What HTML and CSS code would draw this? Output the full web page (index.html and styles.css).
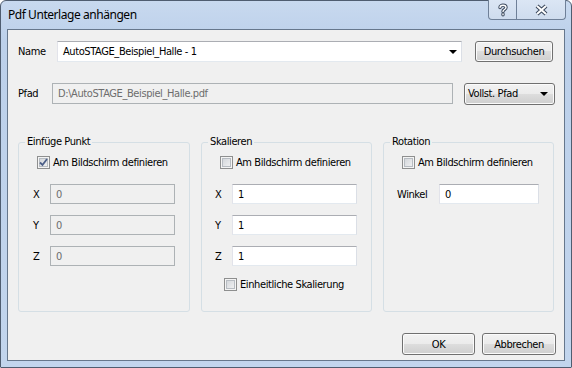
FILE: index.html
```html
<!DOCTYPE html>
<html lang="de">
<head>
    <meta charset="UTF-8">
    <title>Pdf Unterlage anhängen</title>
    <link rel="stylesheet" href="styles.css">
</head>
<body>

    <!--Fenster-->
    <div class="window">

        <!--Titelleiste-->
        <div class="titlebar">
            <span class="title">Pdf Unterlage anhängen</span>
            <div class="caption-btns">
                <button class="cap-btn help">
                    <svg width="12" height="14" viewBox="0 0 12 14">
                        <path d="M3 4.5 C3 1.5 9 1.5 9 4.5 C9 6.5 6 6.5 6 8.5 M6 11 L6 11.8" fill="none" stroke="#3c4a5e" stroke-width="3.4" stroke-linecap="round"/>
                        <path d="M3 4.5 C3 1.5 9 1.5 9 4.5 C9 6.5 6 6.5 6 8.5 M6 11 L6 11.8" fill="none" stroke="#fff" stroke-width="1.4" stroke-linecap="round"/>
                    </svg>
                </button>
                <button class="cap-btn close">
                    <svg width="15" height="12" viewBox="0 0 15 12">
                        <path d="M3 2 L12 10 M12 2 L3 10" fill="none" stroke="#3c4a5e" stroke-width="4.2"/>
                        <path d="M3 2 L12 10 M12 2 L3 10" fill="none" stroke="#fff" stroke-width="2"/>
                    </svg>
                </button>
            </div>
        </div>

        <!--Inhalt-->
        <div class="client">

            <div class="row">
                <label class="lbl name-lbl">Name</label>
                <div class="combo name-combo">
                    <span>AutoSTAGE_Beispiel_Halle - 1</span>
                    <span class="arrow"></span>
                </div>
                <button class="btn browse">Durchsuchen</button>
            </div>

            <div class="row row2">
                <label class="lbl path-lbl">Pfad</label>
                <input class="txt path-txt" type="text" value="D:\AutoSTAGE_Beispiel_Halle.pdf" disabled>
                <button class="btn drop">Vollst. Pfad<span class="arrow"></span></button>
            </div>

            <!--Gruppen-->
            <div class="groups">
                <fieldset class="group g1">
                    <legend>Einfüge Punkt</legend>
                    <div class="check-row">
                        <span class="chk checked">
                            <svg width="9" height="9" viewBox="0 0 9 9"><path d="M1 4.5 L3.5 7 L8 1" fill="none" stroke="#4c5f88" stroke-width="1.8"/></svg>
                        </span>
                        Am Bildschirm definieren
                    </div>
                    <div class="field"><span class="flbl">X</span><input class="txt" type="text" value="0" disabled></div>
                    <div class="field"><span class="flbl">Y</span><input class="txt" type="text" value="0" disabled></div>
                    <div class="field"><span class="flbl">Z</span><input class="txt" type="text" value="0" disabled></div>
                </fieldset>

                <fieldset class="group g2">
                    <legend>Skalieren</legend>
                    <div class="check-row"><span class="chk"></span>Am Bildschirm definieren</div>
                    <div class="field"><span class="flbl">X</span><input class="txt" type="text" value="1"></div>
                    <div class="field"><span class="flbl">Y</span><input class="txt" type="text" value="1"></div>
                    <div class="field"><span class="flbl">Z</span><input class="txt" type="text" value="1"></div>
                    <div class="check-row uniform"><span class="chk"></span>Einheitliche Skalierung</div>
                </fieldset>

                <fieldset class="group g3">
                    <legend>Rotation</legend>
                    <div class="check-row"><span class="chk"></span>Am Bildschirm definieren</div>
                    <div class="field"><span class="flbl winkel">Winkel</span><input class="txt angle" type="text" value="0"></div>
                </fieldset>
            </div>

            <!--Buttons unten-->
            <div class="footer">
                <button class="btn ok">OK</button>
                <button class="btn cancel">Abbrechen</button>
            </div>
        </div>
    </div>

</body>
</html>
```

FILE: styles.css
```css
/* ---------- BASIS ---------- */
* { box-sizing:border-box; }

body {
    margin:0;
    background:#fff;
    font:11px "DejaVu Sans Condensed", "Liberation Sans", sans-serif;
    letter-spacing:-0.4px;
    color:#000;
}

/* ---------- FENSTER ---------- */
.window {
    width:572px;
    height:368px;
    background:linear-gradient(#c8d9ef, #bcd0ea 40px, #c2d5ed);
    border:1px solid #4f5d70;
    border-radius:6px 6px 1px 1px;
    padding:0 6px 6px;
    display:flex;
    flex-direction:column;
}

.titlebar {
    height:28px;
    display:flex;
    align-items:flex-start;
}

.title {
    font:12px "Noto Sans", "Open Sans", sans-serif;
    letter-spacing:-0.45px;
    padding:5px 0 0 1px;
    color:#000;
}

.caption-btns {
    margin:-1px -1px 0 auto;
    display:flex;
}

.cap-btn {
    height:20px;
    border:1px solid #6f8098;
    border-top:none;
    background:linear-gradient(#dbe6f4, #cfdcee);
    padding:0;
    display:flex;
    align-items:center;
    justify-content:center;
}
.cap-btn.help { width:29px; border-radius:0 0 0 4px; }
.cap-btn.close { width:49px; border-left:none; border-radius:0 0 4px 0; }

/* ---------- CLIENT ---------- */
.client {
    flex:1;
    background:#f0f0f0;
    border:1px solid #66778c;
    padding:11px 0 0 10px;
    display:flex;
    flex-direction:column;
}

.row {
    display:flex;
    align-items:center;
    height:21px;
}
.row2 { margin-top:21px; }

.name-lbl { width:39px; }
.path-lbl { width:34px; }

/* ---------- TEXTFELDER ---------- */
.txt {
    height:20px;
    width:125px;
    border:1px solid;
    border-color:#abadb3 #dbdfe6 #e3e9ef #e2e3ea;
    background:#fff;
    padding:0 0 0 5px;
    font:inherit;
    letter-spacing:inherit;
    color:#000;
    outline:none;
}
.txt:disabled {
    background:#f0f0f0;
    border-color:#adb2b5;
    color:#6d6d6d;
}
.path-txt { width:401px; height:21px; }

.combo {
    height:21px;
    border:1px solid;
    border-color:#abadb3 #dbdfe6 #e3e9ef #e2e3ea;
    background:#fff;
    display:flex;
    align-items:center;
    padding:0 0 0 5px;
}
.name-combo { width:405px; }

.arrow {
    margin-left:auto;
    width:0;
    height:0;
    border-left:4px solid transparent;
    border-right:4px solid transparent;
    border-top:4px solid #000;
}
.name-combo .arrow { margin-right:4px; }

/* ---------- BUTTONS ---------- */
.btn {
    height:21px;
    border:1px solid #707070;
    border-radius:3px;
    background:linear-gradient(#f2f2f2, #ebebeb 50%, #dddddd 50%, #cfcfcf);
    box-shadow:inset 0 0 0 1px #fbfbfb;
    font:inherit;
    letter-spacing:inherit;
    color:#000;
    padding:0;
}
.browse { width:78px; margin-left:13px; }

.drop {
    width:91px;
    margin-left:11px;
    display:flex;
    align-items:center;
    padding:0 6px 0 3px;
    height:22px;
}

/* ---------- GRUPPEN ---------- */
.groups {
    display:flex;
    gap:11px;
    margin-top:31px;
}

.group {
    margin:0;
    padding:0;
    height:177px;
    min-width:0;
    border:1px solid #d5dfe5;
    border-radius:3px;
}
.g1 { width:172px; }
.g2, .g3 { width:171px; }

.group legend {
    margin-left:6px;
    padding:0 2px;
    line-height:14px;
}

.check-row {
    display:flex;
    align-items:center;
    height:13px;
    margin:7px 0 0 18px;
}
.check-row.uniform { margin:12px 0 0 22px; }

.chk {
    width:13px;
    height:13px;
    border:1px solid #8e8f8f;
    background:linear-gradient(135deg, #cdd1d6, #f6f6f6);
    box-shadow:inset 0 0 0 1px #f4f4f4, inset 0 0 0 2px #b7bcc2;
    margin-right:3px;
    display:flex;
    align-items:center;
    justify-content:center;
}

.field {
    display:flex;
    align-items:center;
    margin:15px 0 0 14px;
}
.field + .field { margin-top:11px; }
.g2 .field, .g3 .field { margin-left:13px; }

.flbl { width:17px; }
.flbl.winkel { width:42px; }
.angle { width:100px; }

/* ---------- FOOTER ---------- */
.footer {
    display:flex;
    justify-content:flex-end;
    gap:7px;
    margin-top:21px;
    padding-right:8px;
}
.ok { width:73px; height:22px; }
.cancel { width:74px; height:22px; }
```
